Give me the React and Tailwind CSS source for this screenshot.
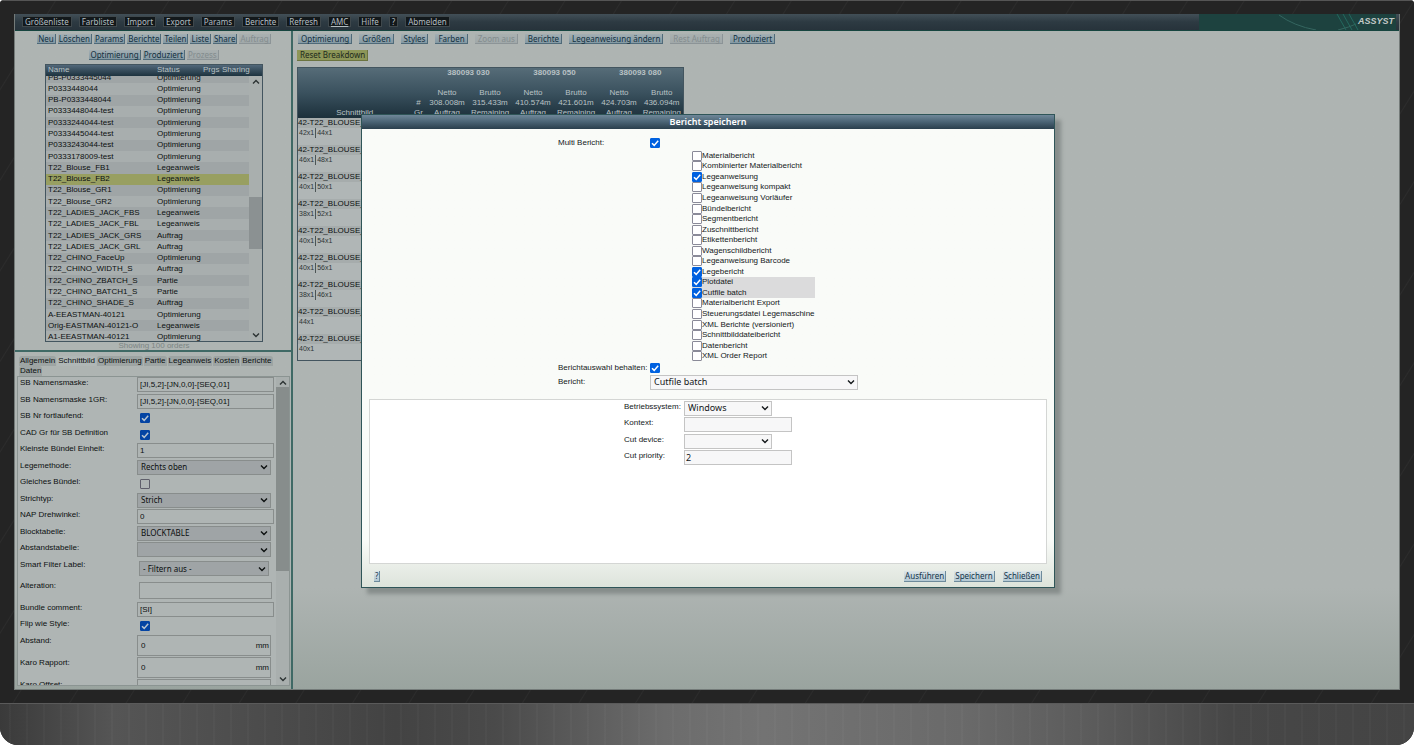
import { useState } from "react";

const UI = "font-['Liberation_Sans',Arial,sans-serif]";

const menu = [
    "Größenliste",
    "Farbliste",
    "Import",
    "Export",
    "Params",
    "Berichte",
    "Refresh",
    "AMC",
    "Hilfe",
    "?",
    "Abmelden",
];

const orderActions = [
    ["Neu", "Löschen", "Params", "Berichte", "Teilen", "Liste", "Share", "Auftrag"],
    ["Optimierung", "Produziert", "Prozess"],
];

const breakdownActions = [
    "Optimierung",
    "Größen",
    "Styles",
    "Farben",
    "Zoom aus",
    "Berichte",
    "Legeanweisung ändern",
    "Rest Auftrag",
    "Produziert",
];

const disabledActions = ["Auftrag", "Prozess", "Zoom aus", "Rest Auftrag"];

const orders = [
    ["PB-P0333445044", "Optimierung"],
    ["P0333448044", "Optimierung"],
    ["PB-P0333448044", "Optimierung"],
    ["P0333448044-test", "Optimierung"],
    ["P0333244044-test", "Optimierung"],
    ["P0333445044-test", "Optimierung"],
    ["P0333243044-test", "Optimierung"],
    ["P0333178009-test", "Optimierung"],
    ["T22_Blouse_FB1", "Legeanweis"],
    ["T22_Blouse_FB2", "Legeanweis"],
    ["T22_Blouse_GR1", "Optimierung"],
    ["T22_Blouse_GR2", "Optimierung"],
    ["T22_LADIES_JACK_FBS", "Legeanweis"],
    ["T22_LADIES_JACK_FBL", "Legeanweis"],
    ["T22_LADIES_JACK_GRS", "Auftrag"],
    ["T22_LADIES_JACK_GRL", "Auftrag"],
    ["T22_CHINO_FaceUp", "Optimierung"],
    ["T22_CHINO_WIDTH_S", "Auftrag"],
    ["T22_CHINO_ZBATCH_S", "Partie"],
    ["T22_CHINO_BATCH1_S", "Partie"],
    ["T22_CHINO_SHADE_S", "Auftrag"],
    ["A-EEASTMAN-40121", "Optimierung"],
    ["Orig-EASTMAN-40121-O", "Legeanweis"],
    ["A1-EEASTMAN-40121", "Optimierung"],
];

const tabs = [
    "Allgemein",
    "Schnittbild",
    "Optimierung",
    "Partie",
    "Legeanweis",
    "Kosten",
    "Berichte",
    "Daten",
];

const settings = [
    { label: "SB Namensmaske:", type: "text", value: "[JI,5,2]-[JN,0,0]-[SEQ,01]" },
    { label: "SB Namensmaske 1GR:", type: "text", value: "[JI,5,2]-[JN,0,0]-[SEQ,01]" },
    { label: "SB Nr fortlaufend:", type: "check", value: true },
    { label: "CAD Gr für SB Definition", type: "check", value: true },
    { label: "Kleinste Bündel Einheit:", type: "text", value: "1" },
    { label: "Legemethode:", type: "select", value: "Rechts oben" },
    { label: "Gleiches Bündel:", type: "check", value: false },
    { label: "Strichtyp:", type: "select", value: "Strich" },
    { label: "NAP Drehwinkel:", type: "text", value: "0" },
    { label: "Blocktabelle:", type: "select", value: "BLOCKTABLE" },
    { label: "Abstandstabelle:", type: "select", value: "" },
];

const materials = [
    ["380093 030", "308.008m", "315.433m"],
    ["380093 050", "410.574m", "421.601m"],
    ["380093 080", "424.703m", "436.094m"],
];

const sizes = [
    ["42x1", "44x1"],
    ["46x1", "48x1"],
    ["40x1", "50x1"],
    ["38x1", "52x1"],
    ["40x1", "54x1"],
    ["40x1", "56x1"],
    ["38x1", "46x1"],
    ["44x1"],
    ["40x1"],
];

const reports = [
    "Materialbericht",
    "Kombinierter Materialbericht",
    "Legeanweisung",
    "Legeanweisung kompakt",
    "Legeanweisung Vorläufer",
    "Bündelbericht",
    "Segmentbericht",
    "Zuschnittbericht",
    "Etikettenbericht",
    "Wagenschildbericht",
    "Legeanweisung Barcode",
    "Legebericht",
    "Plotdatei",
    "Cutfile batch",
    "Materialbericht Export",
    "Steuerungsdatei Legemaschine",
    "XML Berichte (versioniert)",
    "Schnittbilddateibericht",
    "Datenbericht",
    "XML Order Report",
];

function Chevron({ up = false, className = "" }) {
    return (
        <svg
            viewBox="0 0 8 6"
            className={`pointer-events-none h-[6px] w-[8px] ${className}`}
            fill="none"
            stroke="currentColor"
            strokeWidth="1.4"
        >
            <path d={up ? "M1 4.5 4 1.5 7 4.5" : "M1 1.5 4 4.5 7 1.5"} />
        </svg>
    );
}

function Check({ id, checked, onChange, dim = false }) {
    return (
        <span className="grid size-[10px] shrink-0">
            <input
                id={id}
                type="checkbox"
                checked={checked}
                onChange={onChange}
                className={`peer col-start-1 row-start-1 size-[10px] appearance-none rounded-[1px] border ${
                    dim
                        ? "border-[#5f5f6b] checked:border-[#0444a3] checked:bg-[#0444a3]"
                        : "border-[#8a8a98] bg-white checked:border-[#0061e0] checked:bg-[#0061e0]"
                }`}
            />
            <svg
                viewBox="0 0 10 10"
                className={`pointer-events-none invisible col-start-1 row-start-1 size-[10px] peer-checked:visible ${
                    dim ? "text-[#b8c4d0]" : "text-white"
                }`}
                fill="none"
                stroke="currentColor"
                strokeWidth="1.5"
            >
                <path d="M2 5.2 4.2 7.4 8.2 2.8" />
            </svg>
        </span>
    );
}

function Select({ id, value, className = "", dim = false }) {
    return (
        <span
            className={`grid border ${
                dim ? "border-[#888d8c] bg-[#9fa4a6]" : "border-[#c4c4c4] bg-[#f7f7f8]"
            } ${className}`}
        >
            <select
                id={id}
                defaultValue={value}
                className="col-start-1 row-start-1 h-full w-full appearance-none px-[3px] font-['Noto_Sans',sans-serif]"
            >
                <option>{value}</option>
            </select>
            <Chevron className="col-start-1 row-start-1 mr-[2px] self-center justify-self-end" />
        </span>
    );
}

function ToolButton({ children, wide = false, disabled = false }) {
    return (
        <button
            disabled={disabled}
            className={`h-[10px] border-r border-b bg-linear-to-b text-[8px] leading-[9px] whitespace-nowrap font-['Noto_Sans',sans-serif] ${
                wide ? "pr-[2px] pl-[3px]" : "px-px"
            } ${
                disabled
                    ? "border-[#8c9497] from-[#a9b0b0] to-[#a0a8a9] text-[#838c8e]"
                    : "border-[#4f6a79] from-[#a3afb3] to-[#8499a4] text-[#12303f]"
            }`}
        >
            {children}
        </button>
    );
}

function DialogButton({ children, onClick }) {
    return (
        <button
            onClick={onClick}
            className="h-[11px] border-r border-b border-[#6d8a9b] bg-linear-to-b from-[#dce5e8] to-[#b3c8d3] px-px text-[8px] leading-[10px] text-[#12344a] font-['Noto_Sans',sans-serif]"
        >
            {children}
        </button>
    );
}

function Scrollbar({ thumb }) {
    return (
        <div className="flex w-[13px] shrink-0 flex-col items-center justify-between bg-[#a9afae] py-[3px] text-[#2c3333]">
            <Chevron up />
            <div className="flex min-h-0 w-full flex-1 flex-col py-px">{thumb}</div>
            <Chevron />
        </div>
    );
}

function TopBar() {
    return (
        <header className="flex h-[17px] shrink-0 items-center border-b border-[#16453f] bg-linear-to-b from-[#424f57] via-[#2d3a42] to-[#27333b]">
            <nav className="flex items-center gap-[7px] pb-px pl-[7px]">
                {menu.map((item) => (
                    <button
                        key={item}
                        className={`h-[11px] border border-[#3f484c] bg-[#12181b] px-[2px] text-[8px] leading-[9px] text-[#b4bec2] font-['Noto_Sans',sans-serif] ${
                            item === "AMC" ? "underline" : ""
                        }`}
                    >
                        {item}
                    </button>
                ))}
            </nav>
            <div className="ml-auto flex h-full w-[197px] items-center justify-end bg-[#1d423f]">
                <svg viewBox="0 0 150 16" className="h-[16px] w-[150px]" fill="none">
                    <path d="M33 1Q48 12 70 16M92 16Q104 13 110 10" stroke="#356660" />
                    <path d="M91 0 100 16M97 0 106 16M103 0 112 16" stroke="#24695f" />
                </svg>
            </div>
            <div className="-ml-[40px] mr-[5px] w-[38px] text-right text-[9px] font-bold text-[#c3cac8] italic">
                ASSYST
            </div>
        </header>
    );
}

function OrderList() {
    return (
        <section className="flex h-[321px] shrink-0 flex-col items-center border-b-2 border-[#3f6965] pt-[3px] pl-[2px]">
            <div className="mb-[4px] flex flex-col items-center gap-[6px]">
                {orderActions.map((row, i) => (
                    <div key={i} className="flex gap-[2px]">
                        {row.map((item) => (
                            <ToolButton key={item} disabled={disabledActions.includes(item)}>
                                {item}
                            </ToolButton>
                        ))}
                    </div>
                ))}
            </div>
            <div className="flex h-[278px] w-[218px] shrink-0 flex-col border border-[#43555f] text-[8px]">
                <div className="flex h-[11px] shrink-0 bg-linear-to-b from-[#52687a] to-[#1d333f] pl-[2px] leading-[10px] text-[#b9c2c5]">
                    <span className="w-[109px]">Name</span>
                    <span className="w-[46px]">Status</span>
                    <span className="w-[19px]">Prgs</span>
                    <span>Sharing</span>
                </div>
                <div className="flex min-h-0 flex-1">
                    <div className="flex-1 overflow-hidden">
                        <table className="-mt-[4px] h-[271px] w-full leading-none text-[#0c1010]">
                            <tbody>
                                {orders.map(([name, status], i) => (
                                    <tr
                                        key={name}
                                        className={
                                            name === "T22_Blouse_FB2"
                                                ? "bg-[#989f61]"
                                                : i % 2
                                                  ? "bg-[#a8aeae]"
                                                  : "bg-[#9fa5a6]"
                                        }
                                    >
                                        <td className="w-[111px] p-0 pl-[2px]">{name}</td>
                                        <td className="p-0">{status}</td>
                                    </tr>
                                ))}
                            </tbody>
                        </table>
                    </div>
                    <Scrollbar
                        thumb={<div className="mt-[111px] h-[52px] w-full bg-[#8b9192]" />}
                    />
                </div>
            </div>
            <p className="text-[8px] leading-[8px] text-[#7c8584]">Showing 100 orders</p>
        </section>
    );
}

function Setting({ label, id, className = "", children }) {
    return (
        <div className={`grid grid-cols-[117px_1fr] items-start ${className}`}>
            <label htmlFor={id} className="leading-[12px]">
                {label}
            </label>
            {children}
        </div>
    );
}

const dimInput = "w-[137px] border border-[#888d8c] bg-[#afb5b4] pl-[2px]";

function SettingsForm() {
    const [values, setValues] = useState(settings.map((s) => s.value));
    const [flip, setFlip] = useState(true);

    function toggle(i) {
        setValues(values.map((v, n) => (n === i ? !v : v)));
    }

    return (
        <section className="flex min-h-0 flex-1 flex-col pt-[4px] pr-px pb-[3px] pl-[2px] text-[8px] text-[#0c1010]">
            <div className="flex flex-wrap gap-x-px pl-[2px]" role="tablist">
                {tabs.map((tab) => (
                    <button
                        key={tab}
                        role="tab"
                        className={`rounded-t-[3px] px-px leading-[10px] ${
                            tab === "Schnittbild" ? "bg-[#b0b7b6]" : "bg-[#9da4a3]"
                        }`}
                    >
                        {tab}
                    </button>
                ))}
            </div>
            <div className="flex min-h-0 flex-1 border border-[#8b9492] bg-[#afb5b4]">
                <div className="flex-1 overflow-hidden pl-[2px]">
                    <div className="grid h-[182px] auto-rows-fr">
                        {settings.map(({ label, type, value }, i) => (
                            <Setting key={label} label={label} id={"setting_" + i}>
                                {type === "text" && (
                                    <input
                                        id={"setting_" + i}
                                        type="text"
                                        defaultValue={value}
                                        className={`h-[15px] ${dimInput}`}
                                    />
                                )}
                                {type === "select" && (
                                    <Select
                                        dim
                                        id={"setting_" + i}
                                        value={value}
                                        className="h-[15px] w-[134px]"
                                    />
                                )}
                                {type === "check" && (
                                    <span className="pt-[3px] pl-[3px]">
                                        <Check
                                            dim
                                            id={"setting_" + i}
                                            checked={values[i]}
                                            onChange={() => toggle(i)}
                                        />
                                    </span>
                                )}
                            </Setting>
                        ))}
                    </div>
                    <Setting label="Smart Filter Label:" id="filter" className="h-[21px]">
                        <Select
                            dim
                            id="filter"
                            value="- Filtern aus -"
                            className="mt-[2px] ml-[2px] h-[15px] w-[130px]"
                        />
                    </Setting>
                    <Setting label="Alteration:" id="alteration" className="h-[22px]">
                        <input
                            id="alteration"
                            type="text"
                            className="mt-[2px] ml-[2px] h-[17px] w-[133px] border border-[#888d8c]"
                        />
                    </Setting>
                    <Setting label="Bundle comment:" id="bundle" className="h-[16px]">
                        <input
                            id="bundle"
                            type="text"
                            defaultValue="[SI]"
                            className={`h-[15px] ${dimInput}`}
                        />
                    </Setting>
                    <Setting label="Flip wie Style:" id="flip" className="h-[17px]">
                        <span className="pt-[3px] pl-[3px]">
                            <Check dim id="flip" checked={flip} onChange={() => setFlip(!flip)} />
                        </span>
                    </Setting>
                    {["Abstand:", "Karo Rapport:", "Karo Offset:"].map((label) => (
                        <Setting key={label} label={label} id={label} className="h-[22px]">
                            <span className="flex h-[21px] w-[134px] items-center border border-[#888d8c] pr-px pl-[3px]">
                                <input
                                    id={label}
                                    type="text"
                                    defaultValue="0"
                                    className="w-full min-w-0"
                                />
                                mm
                            </span>
                        </Setting>
                    ))}
                </div>
                <Scrollbar thumb={<div className="h-[184px] w-full bg-[#878d8c]" />} />
            </div>
        </section>
    );
}

function Breakdown() {
    return (
        <main className="min-w-0 flex-1 pt-[3px] pl-[4px]">
            <div className="flex h-[16px] items-start gap-[7px] pl-px">
                {breakdownActions.map((item) => (
                    <ToolButton key={item} wide disabled={disabledActions.includes(item)}>
                        {item}
                    </ToolButton>
                ))}
            </div>
            <button className="block h-[11px] border-r border-b border-[#6c7440] bg-[#8d9658] pr-[2px] pl-[3px] text-[8px] leading-[10px] text-[#1d2a1c] font-['Noto_Sans',sans-serif]">
                Reset Breakdown
            </button>
            <table className="mt-[6px] w-[387px] table-fixed border-collapse border border-[#43555f] text-[8px] leading-[10px] text-[#0c1010]">
                <thead className="bg-linear-to-b from-[#566c78] via-[#3a515e] to-[#1c303b] text-center text-[#b9c2c5]">
                    <tr className="h-[20px] align-top">
                        <th className="w-[114px] p-0" />
                        <th className="w-[14px] p-0" />
                        {materials.map(([name]) => (
                            <th key={name} colSpan={2} className="p-0">
                                {name}
                            </th>
                        ))}
                    </tr>
                    <tr>
                        <td className="p-0" colSpan={2} />
                        {materials.map(([name]) => [
                            <td key={name} className="p-0">
                                Netto
                            </td>,
                            <td key={name + "b"} className="p-0">
                                Brutto
                            </td>,
                        ])}
                    </tr>
                    <tr>
                        <td className="p-0" />
                        <td className="p-0">#</td>
                        {materials.map(([name, net, gross]) => [
                            <td key={name} className="p-0">
                                {net}
                            </td>,
                            <td key={name + "b"} className="p-0">
                                {gross}
                            </td>,
                        ])}
                    </tr>
                    <tr>
                        <td className="p-0">Schnittbild</td>
                        <td className="p-0">Gr</td>
                        {materials.map(([name]) => [
                            <td key={name} className="p-0">
                                Auftrag
                            </td>,
                            <td key={name + "b"} className="p-0">
                                Remaining
                            </td>,
                        ])}
                    </tr>
                </thead>
                <tbody>
                    {sizes.map((row, i) => (
                        <tr key={i} className="h-[27px] bg-[#b0b6b6] align-top">
                            <td className="p-0" colSpan={8}>
                                <div className="bg-[#a6acac]">42-T22_BLOUSE_</div>
                                <div className="flex pl-px text-[7px] text-[#2e3535]">
                                    {row.map((size, n) => (
                                        <span
                                            key={size}
                                            className={n ? "ml-px border-l border-[#4c5555] pl-px" : ""}
                                        >
                                            {size}
                                        </span>
                                    ))}
                                </div>
                            </td>
                        </tr>
                    ))}
                </tbody>
            </table>
        </main>
    );
}

function ReportDialog({ onClose }) {
    const [multi, setMulti] = useState(true);
    const [keep, setKeep] = useState(true);
    const [selected, setSelected] = useState([
        "Legeanweisung",
        "Legebericht",
        "Plotdatei",
        "Cutfile batch",
    ]);

    function toggleReport(name) {
        setSelected(
            selected.includes(name)
                ? selected.filter((item) => item !== name)
                : [...selected, name],
        );
    }

    const field = "border border-[#c4c4c4] bg-[#f7f7f8]";

    return (
        <div
            role="dialog"
            aria-labelledby="dialog_title"
            className="flex w-full max-w-[694px] flex-col border border-[#2f5558] bg-linear-to-b from-[#f9fbf8] from-90% to-[#dde3db] text-[8px] text-[#14181a] shadow-[6px_6px_4px_#868d8b]"
        >
            <h2
                id="dialog_title"
                className="h-[14px] bg-linear-to-b from-[#70889a] via-[#4a6374] to-[#2a3f4d] text-center text-[9px] leading-[14px] font-semibold text-white font-['Noto_Sans',sans-serif]"
            >
                Bericht speichern
            </h2>
            <div className="mx-auto mt-[9px] grid w-[300px] grid-cols-[92px_1fr] items-center leading-[10px]">
                <label htmlFor="multi">Multi Bericht:</label>
                <Check id="multi" checked={multi} onChange={() => setMulti(!multi)} />
                <div className="col-start-2 mt-[3px] mb-px ml-[42px] grid h-[211px] w-[123px] auto-rows-fr">
                    {reports.map((name) => (
                        <label
                            key={name}
                            className={`flex items-center whitespace-nowrap ${
                                name === "Plotdatei" || name === "Cutfile batch"
                                    ? "bg-[#dbdbdc]"
                                    : ""
                            }`}
                        >
                            <Check
                                checked={selected.includes(name)}
                                onChange={() => toggleReport(name)}
                            />
                            {name}
                        </label>
                    ))}
                </div>
                <label htmlFor="keep">Berichtauswahl behalten:</label>
                <Check id="keep" checked={keep} onChange={() => setKeep(!keep)} />
                <label htmlFor="report" className="mt-[2px]">
                    Bericht:
                </label>
                <Select id="report" value="Cutfile batch" className="mt-[2px] h-[15px] text-[9px]" />
            </div>
            <div className="mx-[7px] mt-[9px] h-[165px] border border-[#d4d6d4] bg-white pt-px">
                <div className="mx-auto grid h-[66px] w-[168px] auto-rows-fr grid-cols-[60px_108px] items-start leading-[12px]">
                    <label htmlFor="os">Betriebssystem:</label>
                    <Select id="os" value="Windows" className="h-[15px] w-[88px] text-[9px]" />
                    <label htmlFor="context">Kontext:</label>
                    <input id="context" type="text" className={`h-[15px] ${field}`} />
                    <label htmlFor="device">Cut device:</label>
                    <Select id="device" value="" className="h-[15px] w-[88px] text-[9px]" />
                    <label htmlFor="priority">Cut priority:</label>
                    <input
                        id="priority"
                        type="text"
                        defaultValue="2"
                        className={`h-[15px] pl-px text-[9px] font-['Noto_Sans',sans-serif] ${field}`}
                    />
                </div>
            </div>
            <div className="flex items-center gap-[8px] px-[12px] pt-[7px] pb-[5px]">
                <DialogButton>?</DialogButton>
                <span className="flex-1" />
                <DialogButton>Ausführen</DialogButton>
                <DialogButton>Speichern</DialogButton>
                <DialogButton onClick={onClose}>Schließen</DialogButton>
            </div>
        </div>
    );
}

export default function App() {
    const [isOpen, setIsOpen] = useState(true);

    return (
        <div
            className={`flex h-screen flex-col overflow-hidden rounded-t-[4px] rounded-b-[18px] bg-[#1f1f1f] ${UI}`}
        >
            <div className="flex min-h-0 flex-1 border-t border-[#555] bg-[repeating-linear-gradient(122deg,#242424_0px,#242424_46px,#2c2c2c_47px,#242424_48px)] px-[14px] pt-[13px] pb-[13px]">
                <div className="relative flex min-w-0 flex-1 flex-col border border-t-0 border-[#747b79] bg-linear-to-b from-[#aeb4b2] from-85% to-[#9aa49f]">
                    <TopBar />
                    <div className="flex min-h-0 flex-1">
                        <aside className="flex w-[278px] shrink-0 flex-col border-r-2 border-[#3f6965]">
                            <OrderList />
                            <SettingsForm />
                        </aside>
                        <Breakdown />
                    </div>
                    {isOpen && (
                        <div className="absolute inset-0 flex items-center justify-center pb-[2px] pl-[2px]">
                            <ReportDialog onClose={() => setIsOpen(false)} />
                        </div>
                    )}
                </div>
            </div>
            <div className="h-[42px] shrink-0 border-t border-[#5a5a5a] bg-[repeating-linear-gradient(90deg,#ffffff00_0px,#ffffff00_9px,#ffffff0c_10px,#ffffff00_11px,#ffffff00_17px),linear-gradient(90deg,#3a3a3a,#555_8%,#4e4e4e_16%,#434343_28%,#4a4a4a_35%,#6c6c6c_47%,#737373_54%,#6a6a6a_68%,#5a5a5a_78%,#474747_87%,#444)]" />
        </div>
    );
}
